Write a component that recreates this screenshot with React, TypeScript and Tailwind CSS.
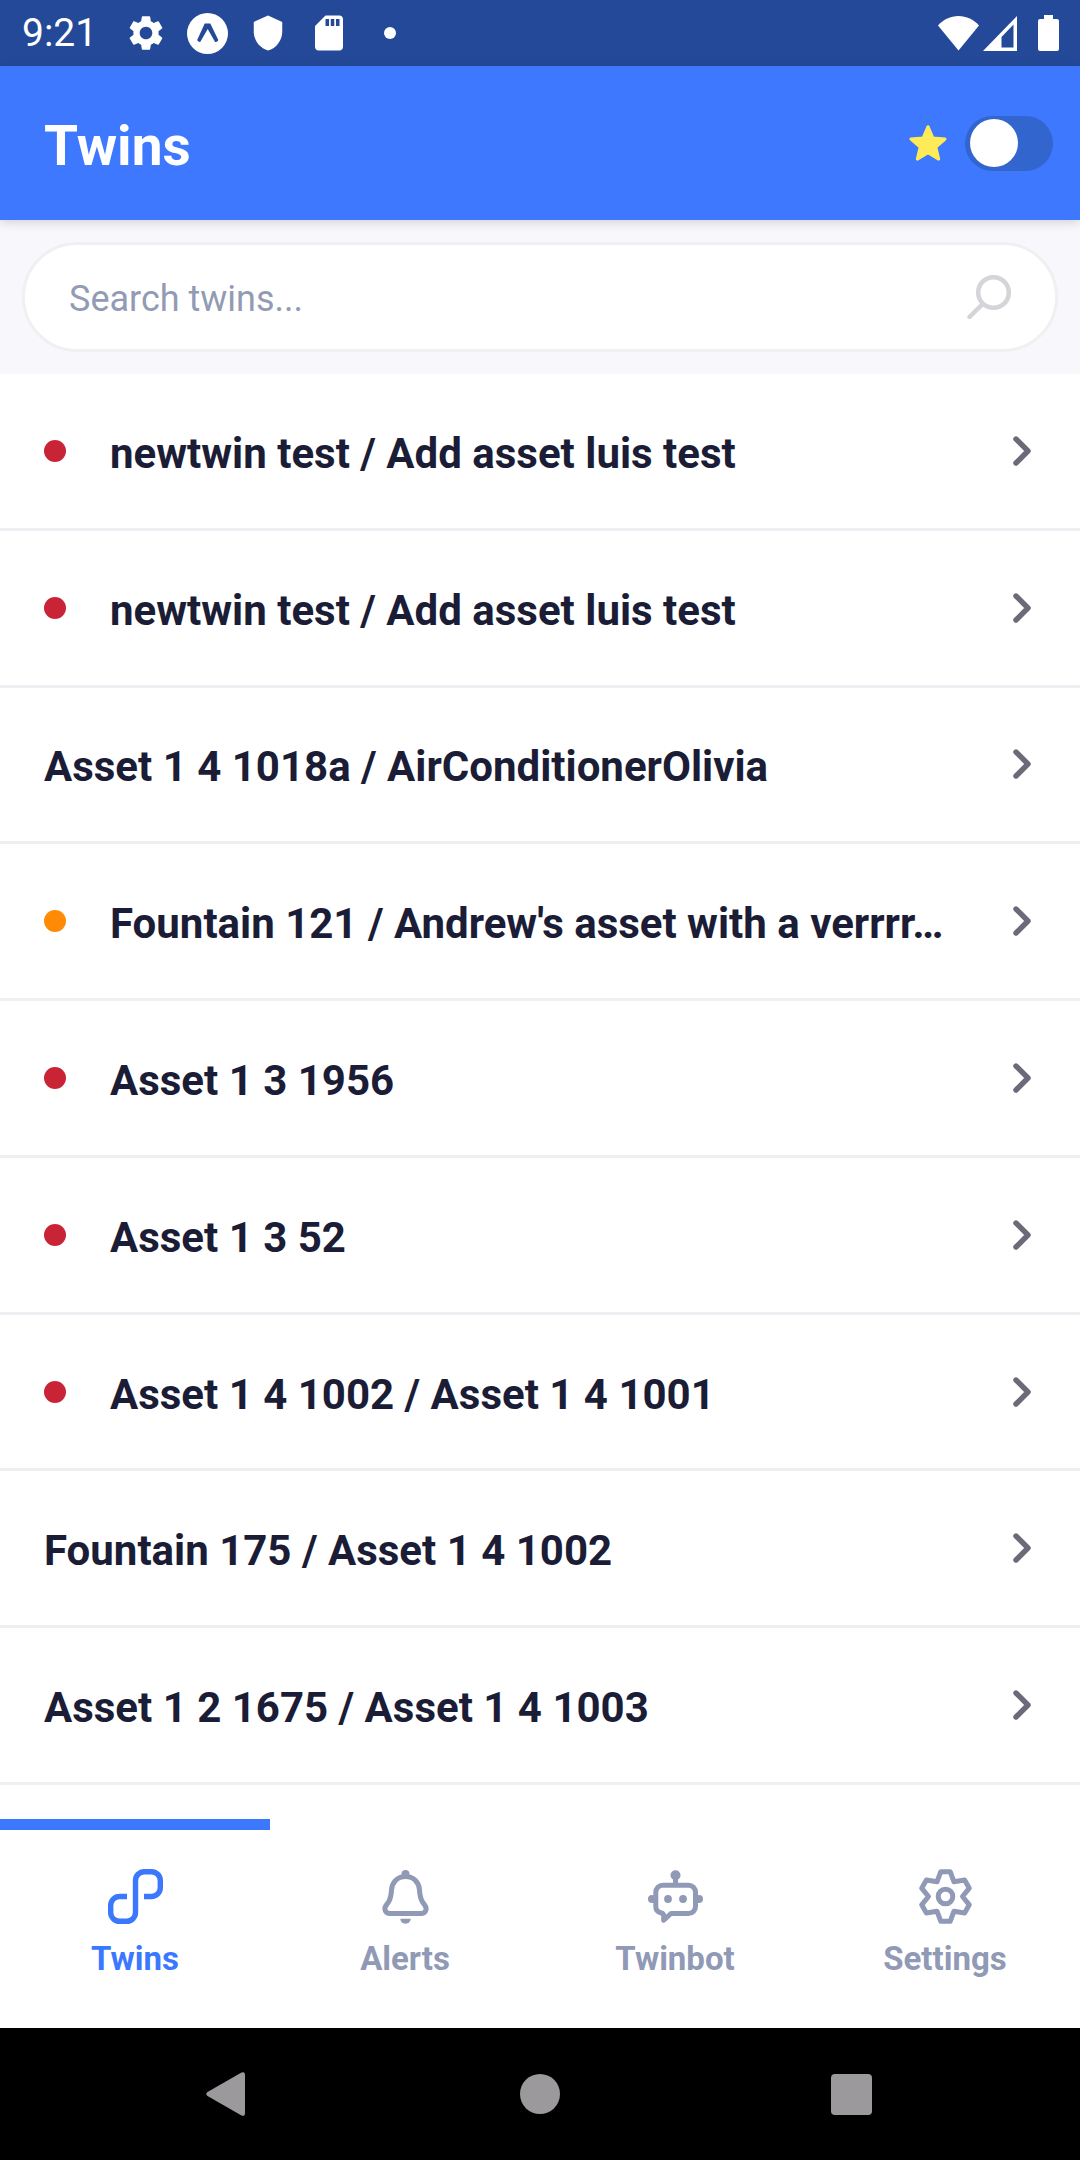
import { useState } from "react";
import type { ReactNode } from "react";
import { MdSdCard, MdSettings, MdShield } from "react-icons/md";

type Twin = {
  id: number;
  name: string;
  status?: "critical" | "warning";
};

const twins: Twin[] = [
  { id: 1, name: "newtwin test / Add asset luis test", status: "critical" },
  { id: 2, name: "newtwin test / Add asset luis test", status: "critical" },
  { id: 3, name: "Asset 1 4 1018a / AirConditionerOlivia" },
  { id: 4, name: "Fountain 121 / Andrew's asset with a verrrr…", status: "warning" },
  { id: 5, name: "Asset 1 3 1956", status: "critical" },
  { id: 6, name: "Asset 1 3 52", status: "critical" },
  { id: 7, name: "Asset 1 4 1002 / Asset 1 4 1001", status: "critical" },
  { id: 8, name: "Fountain 175 / Asset 1 4 1002" },
  { id: 9, name: "Asset 1 2 1675 / Asset 1 4 1003" },
];

const dotColors = {
  critical: "bg-[#c92436]",
  warning: "bg-[#ff8a05]",
};

function TwinsIcon() {
  return (
    <svg className="size-[55px]" viewBox="0 0 55 55" fill="none" stroke="currentColor" strokeWidth="5.4">
      <path d="M19 27.5h-7.500a8.800 8.800 0 0 0-8.800 8.800v7.200a8.800 8.800 0 0 0 8.800 8.800h7.200a8.800 8.800 0 0 0 8.800-8.800v-32a8.800 8.800 0 0 1 8.800-8.800h7.200a8.800 8.800 0 0 1 8.800 8.800v7.200a8.800 8.800 0 0 1-8.800 8.800H36" />
    </svg>
  );
}

function BellIcon() {
  return (
    <svg className="size-[55px]" viewBox="0 0 55 55" fill="none" stroke="currentColor" strokeWidth="5">
      <path d="M27.5 7.5C19 7.5 14 13.5 13.5 21c-.3 5-.5 8-3 12L8 36.5c-2.500 3.500-.5 8 4 8h31c4.500 0 6.500-4.500 4-8L44.5 33c-2.500-4-2.700-7-3-12-.5-7.500-5.500-13.500-14-13.500Z" />
      <circle cx="27.5" cy="5" r="4" fill="currentColor" stroke="none" />
      <path d="M22.3 49.7h10.400a5.200 5 0 0 1-10.400 0Z" fill="currentColor" stroke="none" />
    </svg>
  );
}

function BotIcon() {
  return (
    <svg className="size-[55px]" viewBox="0 0 55 55" fill="none" stroke="currentColor" strokeWidth="5" strokeLinejoin="round">
      <path d="M14.8 16.2h25.700a7 7 0 0 1 7 7v14.300a7 7 0 0 1-7 7H23L15.7 51.2V47c0-2-1.200-2.900-2.900-3.300-3-.7-5-3-5-6.200V23.2a7 7 0 0 1 7-7Z" />
      <path d="M27.5 16V8" />
      <g fill="currentColor" stroke="none">
        <circle cx="27.5" cy="6.2" r="5" />
        <circle cx="20" cy="30" r="3.9" />
        <circle cx="35" cy="30" r="3.9" />
        <circle cx="4" cy="30" r="4" />
        <circle cx="51" cy="30" r="4" />
      </g>
    </svg>
  );
}

function GearIcon() {
  return (
    <svg className="size-[55px]" viewBox="-27.5 -27.5 55 55" fill="none" stroke="currentColor" strokeWidth="5">
      <path d="M-4.7-24.8 4.7-24.8 8.5-14.7 19.1-16.5 23.8-8.3 17 0 23.8 8.3 19.1 16.5 8.5 14.7 4.7 24.8-4.7 24.8-8.5 14.7-19.1 16.5-23.8 8.3-17 0-23.8-8.3-19.1-16.5-8.5-14.7Z" strokeLinejoin="round" />
      <circle r="7.3" />
    </svg>
  );
}

const tabs: { label: string; icon: ReactNode }[] = [
  { label: "Twins", icon: <TwinsIcon /> },
  { label: "Alerts", icon: <BellIcon /> },
  { label: "Twinbot", icon: <BotIcon /> },
  { label: "Settings", icon: <GearIcon /> },
];

function StatusBar() {
  return (
    <div className="flex h-[66px] items-center justify-between bg-[#234998] pl-[22px] pr-[21px] text-white">
      <div className="flex items-center">
        <span className="mr-7 text-[39px] leading-[66px]">9:21</span>
        <MdSettings className="mr-5 size-[42px]" />
        <svg className="mr-[21px] size-[41px]" viewBox="0 0 41 41">
          <circle cx="20.5" cy="20.5" r="20.5" fill="#fff" />
          <path d="M17.7 10.5h5.600l8 16.500c-.5 1.400-1.700 2.200-3.200 1.900L20.7 16 13.2 28.9c-1.400.1-2.600-.6-3-1.800Z" fill="#234998" />
        </svg>
        <MdShield className="mr-[21px] size-[38px]" />
        <MdSdCard className="mr-[34px] size-[42px]" />
        <span className="size-3 rounded-full bg-white" />
      </div>
      <div className="flex items-center">
        <svg className="mr-1 h-[35px] w-[41px]" viewBox="0 0 41 35" fill="currentColor">
          <path d="M20.5 34.5 0 9.5C5.5 3.5 12.5 0 20.5 0S35.5 3.5 41 9.5Z" />
        </svg>
        <svg className="mr-[21px] h-[35px] w-[34px]" viewBox="0 0 34 35" fill="currentColor" fillRule="evenodd">
          <path d="M0 35 34 0v35ZM18.5 21v10.500h12V8.5Z" />
        </svg>
        <svg className="h-[36px] w-[21px]" viewBox="0 0 21 36" fill="currentColor">
          <path d="M6 0h9v4h4a2 2 0 0 1 2 2v28a2 2 0 0 1-2 2H2a2 2 0 0 1-2-2V6a2 2 0 0 1 2-2h4Z" />
        </svg>
      </div>
    </div>
  );
}

function Header() {
  const [favorites, setFavorites] = useState(false);

  return (
    <header className="relative flex h-[154px] items-center justify-between bg-[#3d78ff] pl-11 pr-[27px] shadow-[0_2px_10px_rgba(0,0,0,0.16)]">
      <h1 className="pt-1.5 text-[55px] font-bold leading-[64px] text-white">Twins</h1>
      <div className="flex items-center gap-[18px]">
        <label htmlFor="favorites" aria-label="Favorites only">
          <svg className="size-[38px]" viewBox="0 0 38 38" fill="#ffeb57" stroke="#ffeb57" strokeWidth="3" strokeLinejoin="round">
            <path d="m19 2.700 4.800 11.200 12.200 1.200-9.200 8.100 2.900 11.900L19 28.8 8.3 35.1l2.900-11.900L2 15.1l12.200-1.200Z" />
          </svg>
        </label>
        <input
          id="favorites"
          type="checkbox"
          role="switch"
          checked={favorites}
          onChange={(e) => setFavorites(e.target.checked)}
          className="flex h-[55px] w-[88px] appearance-none items-center rounded-full bg-[#3365cf] px-[5px] before:size-[48px] before:rounded-full before:bg-white checked:justify-end"
        />
      </div>
    </header>
  );
}

function SearchBar() {
  return (
    <div className="bg-[#f8f8fc] px-[22px] py-[22px]">
      <div className="flex h-[110px] items-center rounded-full border-3 border-[#f0f0f3] bg-white px-11">
        <input
          type="text"
          aria-label="Search twins"
          placeholder="Search twins..."
          className="min-w-0 flex-1 pt-1 text-[36px] leading-[44px] text-[#1b1d36] outline-none placeholder:text-[#929bb3]"
        />
        <svg className="size-[44px] shrink-0" viewBox="0 0 44 44" fill="none" stroke="#d5d5d9" strokeWidth="4.5" strokeLinecap="round">
          <circle cx="26.5" cy="17.5" r="15.3" />
          <path d="M15.3 29.3 2.5 42" />
        </svg>
      </div>
    </div>
  );
}

function TwinRow({ twin }: { twin: Twin }) {
  return (
    <li className="flex flex-1 border-b-3 border-[#efeef2]">
      <a href="#" className="flex min-w-0 flex-1 items-center py-12 pl-11 pr-[49px]">
        {twin.status && <span className={`mr-11 size-[22px] shrink-0 rounded-full ${dotColors[twin.status]}`} />}
        <span className="min-w-0 flex-1 truncate pt-1.5 text-[42px] font-bold leading-[50px] text-[#1b1d36]">{twin.name}</span>
        <svg className="ml-11 h-[30px] w-[18px] shrink-0" viewBox="0 0 18 30" fill="none" stroke="#6b6a78" strokeWidth="5.4" strokeLinecap="round" strokeLinejoin="round">
          <path d="m3 3 12 12L3 27" />
        </svg>
      </a>
    </li>
  );
}

function TabBar() {
  const [active, setActive] = useState("Twins");

  return (
    <nav className="grid grid-cols-4 bg-white">
      {tabs.map((tab) => (
        <button
          key={tab.label}
          type="button"
          onClick={() => setActive(tab.label)}
          className={`flex flex-col items-center gap-[15px] border-t-11 pb-[49px] pt-[39px] text-[33px] font-bold leading-[40px] ${
            active === tab.label ? "border-[#3b78fe] text-[#3b78fe]" : "border-transparent text-[#9099b5]"
          }`}
        >
          {tab.icon}
          {tab.label}
        </button>
      ))}
    </nav>
  );
}

function SystemNav() {
  return (
    <div className="flex h-[132px] items-center justify-between bg-black px-[19%] text-[#9b999b]">
      <button type="button" aria-label="Back">
        <svg className="size-[44px]" viewBox="0 0 44 44" fill="currentColor">
          <path d="M2.5 20 36.5.5Q40-.8 40 3v38q0 3.800-3.500 2.500L2.5 24q-2.500-2 0-4Z" />
        </svg>
      </button>
      <button type="button" aria-label="Home">
        <svg className="size-[44px]" viewBox="0 0 44 44" fill="currentColor">
          <circle cx="22" cy="22" r="20" />
        </svg>
      </button>
      <button type="button" aria-label="Recent apps">
        <svg className="size-[44px]" viewBox="0 0 44 44" fill="currentColor">
          <rect x="0" y="2" width="41" height="41" rx="4" />
        </svg>
      </button>
    </div>
  );
}

export default function App() {
  return (
    <div className="flex min-h-screen flex-col bg-white font-['Roboto',sans-serif]">
      <StatusBar />
      <Header />
      <main className="flex flex-1 flex-col">
        <SearchBar />
        <ul className="flex flex-1 flex-col pb-[34px]">
          {twins.map((twin) => (
            <TwinRow key={twin.id} twin={twin} />
          ))}
        </ul>
      </main>
      <TabBar />
      <SystemNav />
    </div>
  );
}
